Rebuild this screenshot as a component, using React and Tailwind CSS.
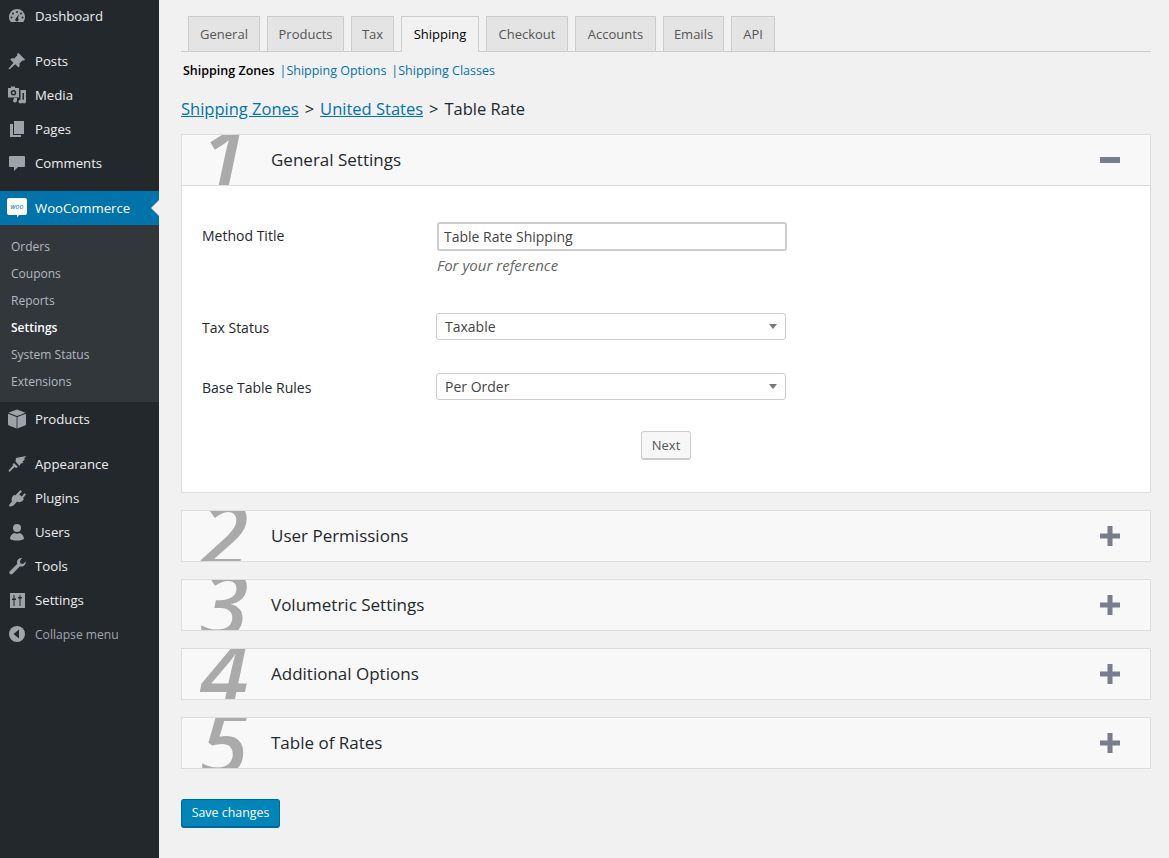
import React from 'react';

const Gray = ({ children, vb = '0 0 20 20', size = 20, fill = '#9ea3a8' }) => (
  <svg width={size} height={size} viewBox={vb} fill={fill} className="shrink-0">
    {children}
  </svg>
);

const icons = {
  dashboard: (
    <Gray>
      <path fillRule="evenodd" d="M10 3a8 8 0 0 0-8 8c0 2 .7 3.700 1.800 5h12.400A8 8 0 0 0 18 11a8 8 0 0 0-8-8zM10 5a1 1 0 1 1 0 2 1 1 0 0 1 0-2zM6 6.500a1 1 0 1 1 0 2 1 1 0 0 1 0-2zM14 6.500a1 1 0 1 1 0 2 1 1 0 0 1 0-2zM4.500 10.500a1 1 0 1 1 0 2 1 1 0 0 1 0-2zM15.500 10.500a1 1 0 1 1 0 2 1 1 0 0 1 0-2zM12 8l-1 4.300a1.700 1.700 0 1 1-2-.1z" />
    </Gray>
  ),
  posts: (
    <Gray>
      <path d="M11.500 2 18 8.500l-1 1.200-1.300-.4-3.300 3.200c.5 1.500.2 3-.8 4l-3.300-3.300L3 18l-1.500.5L2 17l4.500-5.300-3.300-3.300c1-1 2.500-1.300 4-.8l3.200-3.300-.4-1.300z" />
    </Gray>
  ),
  media: (
    <Gray>
      <path fillRule="evenodd" d="M1 3h3V1.500h4V3h4v9.500H1zM6.500 5a2.700 2.700 0 1 0 0 5.400 2.700 2.700 0 0 0 0-5.400z" />
      <circle cx="6.500" cy="7.700" r="1.300" />
      <path d="M13.500 5H19v11.500a2 2 0 1 1-2-2V8h-1.500v8.500a2 2 0 1 1-2-2zM7 13h3v2.500a2 2 0 1 1-3-1.700z" />
    </Gray>
  ),
  pages: (
    <Gray>
      <path d="M7 2h10v13H7z" />
      <path d="M3 5h3v11h8v2H3z" />
    </Gray>
  ),
  comments: (
    <Gray>
      <path d="M3 3h14a1 1 0 0 1 1 1v9a1 1 0 0 1-1 1h-6l-4 4v-4H3a1 1 0 0 1-1-1V4a1 1 0 0 1 1-1z" />
    </Gray>
  ),
  products: (
    <Gray>
      <path d="M10 0.500 18.500 3.700 10 7 1.500 3.700zM1 4.700 9.600 8.100V19.500L2 16.500a1.500 1.500 0 0 1-1-1.300zM19 4.700v10.500a1.500 1.500 0 0 1-1 1.300L10.400 19.500V8.100z" />
      <path d="M5 2.400 13.500 5.700 15 5.100 6.500 1.800z" />
    </Gray>
  ),
  appearance: (
    <Gray>
      <path d="M9 4 19 2l-2 3 1 .5-2.500 2 1 .8-3 1.700-1 2-4-4.500zM7 9l4 4-2 1-1.500-1L3 17.500c-.8.6-1.800-.5-1.200-1.200L6 11.500l-.5-1z" />
    </Gray>
  ),
  plugins: (
    <Gray>
      <path d="m13.500 2 1.500 1.200-2.700 3.300 2.400 2 2.800-3.300 1.500 1.300-3 3.500 1 1-1.200 1.500c-1.500 1.700-3.800 2.100-5.600 1.100L6 18l-3.500.5L2 17l3-3.500C4.200 11.700 4.500 9.500 6 8l1.200-1.300 1 .8z" />
    </Gray>
  ),
  users: (
    <Gray>
      <circle cx="10" cy="6" r="4" />
      <path d="M3 17c0-3.500 2.500-5.500 4.500-6a5 5 0 0 0 5 0c2 .5 4.500 2.500 4.500 6-2 1.200-4.500 1.500-7 1.500S5 18.200 3 17z" />
    </Gray>
  ),
  tools: (
    <Gray>
      <path d="M15 2c-2.500-.5-5 1.500-5 4 0 .7.100 1.200.3 1.700L3 15c-1 1-1 2 0 2.800.8.800 1.800.8 2.700 0l7.300-7.500c3 1 6-1.300 5.700-4.800l-2.700 2.500-2.500-.5-.5-2.500z" />
    </Gray>
  ),
  settings: (
    <Gray>
      <path fillRule="evenodd" d="M3 3h15v15H3zM6.500 5v3.500H5V10h1.500v6h1v-6H9V8.500H7.500V5zM12.500 5v2H11v1.500h1.500V16h1V8.500H15V7h-1.500V5z" />
    </Gray>
  ),
};

const woo = (
  <svg width="20" height="20" viewBox="0 0 20 20" className="shrink-0">
    <path fill="#fff" d="M2 0h16a2 2 0 0 1 2 2v13a2 2 0 0 1-2 2h-6l-2 2.500V17H2a2 2 0 0 1-2-2V2a2 2 0 0 1 2-2z" />
    <text x="10" y="11" textAnchor="middle" fontSize="7" fontStyle="italic" fontWeight="500" fill="#0073aa" className="font-['Open_Sans',sans-serif]">woo</text>
  </svg>
);

const MenuItem = ({ icon, label }) => (
  <div className="flex items-center h-[34px] pl-[7px] gap-2 text-[#eee] text-[13.2px]">
    {icons[icon]}
    <span className="pt-[1px]">{label}</span>
  </div>
);

const subItems = ['Orders', 'Coupons', 'Reports', 'Settings', 'System Status', 'Extensions'];

function Sidebar() {
  return (
    <aside className="w-[159px] shrink-0 bg-[#23282d] pb-[207px]">
      <div className="-mt-[1px]">
        <MenuItem icon="dashboard" label="Dashboard" />
      </div>
      <div className="mt-[11px]">
        <MenuItem icon="posts" label="Posts" />
        <MenuItem icon="media" label="Media" />
        <MenuItem icon="pages" label="Pages" />
        <MenuItem icon="comments" label="Comments" />
      </div>
      <div className="mt-[11px] relative flex items-center h-[34px] pl-[7px] gap-2 bg-[#0073aa] text-white text-[13.2px]">
        {woo}
        <span className="pt-[1px]">WooCommerce</span>
        <span className="absolute right-0 top-[9px] border-y-[8px] border-r-[8px] border-y-transparent border-r-[#f1f1f1]" />
      </div>
      <div className="bg-[#32373c] h-[177px] pt-[8px]">
        {subItems.map(s => (
          <div
            key={s}
            className={`h-[27px] flex items-center pl-[11px] text-[12px] ${s === 'Settings' ? 'text-white font-semibold' : 'text-[#b4b9be]'}`}
          >
            {s}
          </div>
        ))}
      </div>
      <MenuItem icon="products" label="Products" />
      <div className="mt-[11px]">
        <MenuItem icon="appearance" label="Appearance" />
        <MenuItem icon="plugins" label="Plugins" />
        <MenuItem icon="users" label="Users" />
        <MenuItem icon="tools" label="Tools" />
        <MenuItem icon="settings" label="Settings" />
        <div className="flex items-center h-[34px] pl-[8px] gap-[9px] text-[#a0a5aa] text-[12.1px]">
          <svg width="18" height="18" viewBox="0 0 18 18" className="shrink-0">
            <circle cx="9" cy="9" r="8" fill="#a0a5aa" />
            <path d="M11 4.500v9L5.500 9z" fill="#23282d" />
          </svg>
          <span className="pt-[2px]">Collapse menu</span>
        </div>
      </div>
    </aside>
  );
}

const tabs = [
  ['General', 'w-[72px]'],
  ['Products', 'w-[77px]'],
  ['Tax', 'w-[43px]'],
  ['Shipping', 'w-[78px]'],
  ['Checkout', 'w-[82px]'],
  ['Accounts', 'w-[81px]'],
  ['Emails', 'w-[61px]'],
  ['API', 'w-[44px]'],
];

function Tabs() {
  return (
    <div className="flex gap-[7px] pl-[7px] h-[36px] border-b border-[#ccc]">
      {tabs.map(([t, w]) => (
        <div
          key={t}
          className={`${w} h-[36px] pt-[1px] flex items-center justify-center border border-[#ccc] text-[13px] font-medium ${
            t === 'Shipping' ? 'bg-[#f1f1f1] border-b-[#f1f1f1] text-black' : 'bg-[#e4e4e4] h-[35px] text-[#555]'
          }`}
        >
          {t}
        </div>
      ))}
    </div>
  );
}

const Plus = () => (
  <svg width="20" height="20" viewBox="0 0 20 20" fill="#797d8c">
    <path d="M7.500 0h5v7.500H20v5h-7.500V20h-5v-7.500H0v-5h7.500z" />
  </svg>
);

const Minus = () => (
  <svg width="20" height="6" viewBox="0 0 20 6" fill="#797d8c">
    <path d="M0 0h20v6H0z" />
  </svg>
);

const PanelHeader = ({ num, title, open }) => (
  <div className={`relative h-[50px] flex items-center bg-[#f8f8f8] overflow-hidden ${open ? 'border-b border-[#ddd] h-[51px]' : ''}`}>
    <span className="absolute left-[18px] top-[-25px] text-[88px] leading-[96px] italic font-semibold text-[#aaa] select-none">
      {num}
    </span>
    <span className="ml-[89px] text-[17px] font-normal text-[#23282d]">{title}</span>
    <span className="ml-auto mr-[30px] flex items-center">{open ? <Minus /> : <Plus />}</span>
  </div>
);

const Select = ({ value }) => (
  <div className="w-[350px] h-[27px] flex items-center justify-between bg-white border border-[#ccc] rounded-[3px] pl-[8px] pr-[8px] text-[14px] text-[#444] ml-[-1px]">
    <span>{value}</span>
    <span className="border-x-[4px] border-t-[5px] border-x-transparent border-t-[#777]" />
  </div>
);

const Field = ({ label, children, className = '', pad = 'pt-[4px]' }) => (
  <div className={`flex ${className}`}>
    <div className={`w-[235px] text-[14px] text-[#23282d] ${pad}`}>{label}</div>
    <div>{children}</div>
  </div>
);

function GeneralPanel() {
  return (
    <section className="bg-white border border-[#ddd]">
      <PanelHeader num="1" title="General Settings" open />
      <div className="h-[306px] pl-[20px] pt-[36px]">
        <Field label="Method Title" pad="pt-[3px]">
          <div className="w-[350px] h-[29px] flex items-center border-2 border-[#ccc] rounded-[3px] bg-white pl-[5px] text-[14px] text-[#444]">
            Table Rate Shipping
          </div>
          <p className="mt-[4px] text-[15px] leading-[20px] italic text-[#666]">For your reference</p>
        </Field>
        <Field label="Tax Status" className="mt-[38px]">
          <Select value="Taxable" />
        </Field>
        <Field label="Base Table Rules" className="mt-[33px]">
          <Select value="Per Order" />
        </Field>
        <div className="flex justify-center mt-[31px] pr-[20px]">
          <button className="w-[50px] h-[29px] pt-[1px] bg-[#f7f7f7] border border-[#ccc] border-b-[2px] rounded-[3px] text-[13px] text-[#555]">
            Next
          </button>
        </div>
      </div>
    </section>
  );
}

const closed = [
  ['2', 'User Permissions'],
  ['3', 'Volumetric Settings'],
  ['4', 'Additional Options'],
  ['5', 'Table of Rates'],
];

export default function App() {
  return (
    <div className="flex min-h-[858px] bg-[#f1f1f1] font-['Open_Sans',sans-serif]">
      <Sidebar />
      <main className="flex-1 pl-[22px] pr-[18px] pt-[16px]">
        <Tabs />
        <div className="flex items-center h-[20px] mt-[9px] ml-[2px] text-[12.5px]">
          <span className="font-semibold text-black">Shipping Zones</span>
          <span className="text-[#0073aa] ml-[5px]">|Shipping Options</span>
          <span className="text-[#0073aa] ml-[5px]">|Shipping Classes</span>
        </div>
        <div className="flex items-center h-[24px] mt-[16px] mb-[13px] text-[16.5px] font-medium text-[#23282d]">
          <span className="text-[#0073aa] underline">Shipping Zones</span>
          <span className="mx-[6px] font-normal">&gt;</span>
          <span className="text-[#0073aa] underline">United States</span>
          <span className="mx-[6px] font-normal">&gt;</span>
          <span>Table Rate</span>
        </div>
        <GeneralPanel />
        <div className="mt-[17px] flex flex-col gap-[17px]">
          {closed.map(([n, t]) => (
            <section key={n} className="border border-[#ddd]">
              <PanelHeader num={n} title={t} />
            </section>
          ))}
        </div>
        <button className="mt-[30px] w-[99px] h-[29px] pt-[1px] bg-[#0085ba] border border-[#006799] border-b-[2px] rounded-[3px] text-white text-[12.4px]">
          Save changes
        </button>
      </main>
    </div>
  );
}
